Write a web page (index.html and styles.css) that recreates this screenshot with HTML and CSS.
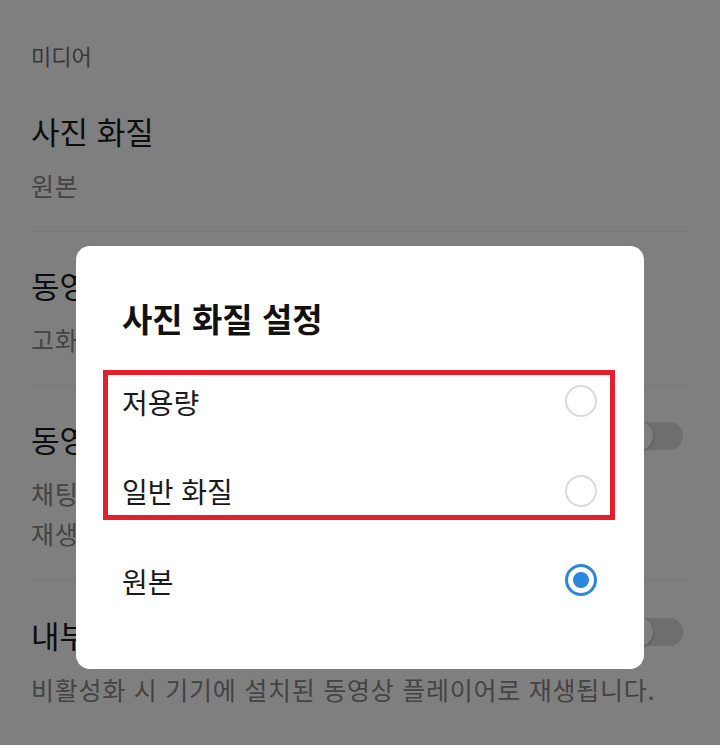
FILE: index.html
```html
<!DOCTYPE html>
<html lang="ko">
<head>
    <meta charset="UTF-8">
    <meta name="viewport" content="width=device-width, initial-scale=1.0">
    <title>미디어 설정</title>
    <link rel="stylesheet" href="styles.css">
</head>
<body>
    <main class="settings">
        <div class="section-label">미디어</div>

        <div class="item">
            <div class="item-head">
                <div class="item-title">사진 화질</div>
            </div>
            <div class="item-sub">원본</div>
        </div>

        <div class="item">
            <div class="item-head">
                <div class="item-title">동영상 화질</div>
            </div>
            <div class="item-sub">고화질</div>
        </div>

        <div class="item">
            <div class="item-head">
                <div class="item-title">동영상 자동 재생</div>
                <div class="switch"><span class="knob"></span></div>
            </div>
            <div class="item-sub">채팅방에서 Wi-Fi 연결 시 동영상을 자동으로<br>재생합니다.</div>
        </div>

        <div class="item">
            <div class="item-head">
                <div class="item-title">내부 플레이어 사용</div>
                <div class="switch"><span class="knob"></span></div>
            </div>
            <div class="item-sub">비활성화 시 기기에 설치된 동영상 플레이어로 재생됩니다.</div>
        </div>
    </main>

    <div class="overlay">
        <div class="dialog">
            <h2>사진 화질 설정</h2>
            <ul class="options">
                <li class="option">
                    <span>저용량</span>
                    <span class="radio"></span>
                </li>
                <li class="option">
                    <span>일반 화질</span>
                    <span class="radio"></span>
                </li>
                <li class="option">
                    <span>원본</span>
                    <span class="radio checked"></span>
                </li>
            </ul>
            <!-- red annotation box around the first two options -->
            <div class="highlight"></div>
        </div>
    </div>
</body>
</html>
```

FILE: styles.css
```css
body, html {
    margin: 0;
    padding: 0;
    font-family: "Noto Sans CJK KR", "Noto Sans", sans-serif;
    background: #ffffff;
    color: #1a1a1a;
    height: 100%;
    overflow: hidden;
}

.settings {
    padding: 0 31px;
}

.section-label {
    padding-top: 40px;
    font-size: 22px;
    line-height: 30px;
    height: 38px;
    color: #707070;
}

.item {
    padding: 35px 0 26px 0;
    border-bottom: 1px solid #eeeeee;
}

.item:last-child {
    border-bottom: none;
    padding-top: 37px;
}

.item-head {
    display: flex;
    justify-content: space-between;
    align-items: center;
    height: 36px;
}

.item-title {
    font-size: 31px;
    line-height: 36px;
    color: #1a1a1a;
}

.item-sub {
    margin-top: 16px;
    font-size: 25px;
    line-height: 40px;
    letter-spacing: 0.75px;
    color: #888888;
}

.switch {
    position: relative;
    width: 60px;
    height: 28px;
    margin: 0 6px 6px 0;
    border-radius: 14px;
    background: #dddddd;
}

.switch .knob {
    position: absolute;
    left: 0;
    top: -1px;
    width: 30px;
    height: 30px;
    border-radius: 50%;
    background: #ffffff;
    box-shadow: 0 1px 3px rgba(0, 0, 0, 0.3);
}

.overlay {
    position: fixed;
    inset: 0;
    background: rgba(0, 0, 0, 0.5);
    display: flex;
    justify-content: center;
    align-items: flex-start;
    padding-top: 246px;
}

.dialog {
    position: relative;
    width: 568px;
    height: 423px;
    box-sizing: border-box;
    padding: 52px 47px 0 46px;
    background: #ffffff;
    border-radius: 14px;
}

.dialog h2 {
    margin: 0 0 19px 0;
    font-size: 33px;
    line-height: 40px;
    font-weight: 700;
    color: #111111;
}

.options {
    list-style: none;
    margin: 0;
    padding: 0;
}

.option {
    display: flex;
    justify-content: space-between;
    align-items: center;
    height: 89.5px;
    font-size: 28px;
    line-height: 36px;
    color: #1a1a1a;
}

.radio {
    width: 32px;
    height: 32px;
    box-sizing: border-box;
    margin-bottom: 1px;
    border: 2.5px solid #d9d9d9;
    border-radius: 50%;
    display: flex;
    align-items: center;
    justify-content: center;
}

.radio.checked {
    border: 3px solid #2b86df;
}

.radio.checked::after {
    content: "";
    width: 16px;
    height: 16px;
    border-radius: 50%;
    background: #2b86df;
}

.highlight {
    position: absolute;
    left: 27px;
    top: 124px;
    width: 512px;
    height: 150px;
    box-sizing: border-box;
    border: 5px solid #e31e2d;
}
```
